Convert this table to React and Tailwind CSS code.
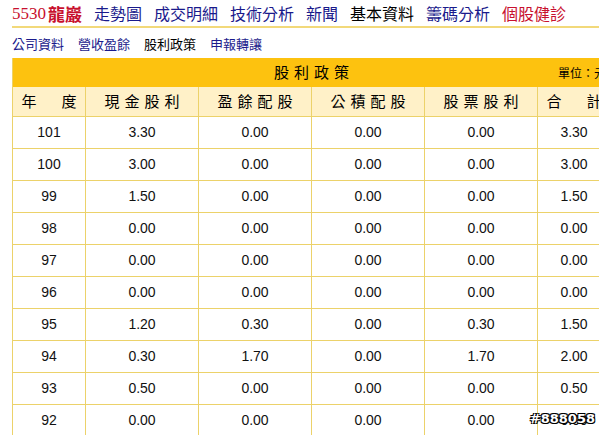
const NAV = [
  { label: "走勢圖", color: "text-[#1a1a8c]" },
  { label: "成交明細", color: "text-[#1a1a8c]" },
  { label: "技術分析", color: "text-[#1a1a8c]" },
  { label: "新聞", color: "text-[#1a1a8c]" },
  { label: "基本資料", color: "text-black" },
  { label: "籌碼分析", color: "text-[#1a1a8c]" },
  { label: "個股健診", color: "text-[#c8102e]" },
];

const SUB = [
  { label: "公司資料", active: false },
  { label: "營收盈餘", active: false },
  { label: "股利政策", active: true },
  { label: "申報轉讓", active: false },
];

const HEADERS = ["年　度", "現金股利", "盈餘配股", "公積配股", "股票股利", "合　計"];

const ROWS = [
  ["101", "3.30", "0.00", "0.00", "0.00", "3.30"],
  ["100", "3.00", "0.00", "0.00", "0.00", "3.00"],
  ["99", "1.50", "0.00", "0.00", "0.00", "1.50"],
  ["98", "0.00", "0.00", "0.00", "0.00", "0.00"],
  ["97", "0.00", "0.00", "0.00", "0.00", "0.00"],
  ["96", "0.00", "0.00", "0.00", "0.00", "0.00"],
  ["95", "1.20", "0.30", "0.00", "0.30", "1.50"],
  ["94", "0.30", "1.70", "0.00", "1.70", "2.00"],
  ["93", "0.50", "0.00", "0.00", "0.00", "0.50"],
  ["92", "0.00", "0.00", "0.00", "0.00", "0.00"],
];

const COLS = "grid grid-cols-[73px_113px_113px_113px_113px_73px]";
const CJK = "font-['Noto_Sans_CJK_TC','Liberation_Sans',sans-serif]";

export default function App() {
  return (
    <div className={`relative w-[599px] h-[435px] overflow-hidden bg-white ${CJK}`}>
      <div className="pl-[12px]">
        <div className="flex items-center h-[26px] gap-[12px] text-[16px] leading-none">
          <span className="flex items-center gap-[2px] text-[#c8102e]">
            <span className="font-['Liberation_Serif',serif] text-[17px]">5530</span>
            <span className="font-bold text-[17px]">龍巖</span>
          </span>
          {NAV.map((n) => (
            <span key={n.label} className={n.color}>
              {n.label}
            </span>
          ))}
        </div>
        <div className="h-[2px] bg-[#f2d97a]" />
        <div className="flex items-center h-[30px] gap-[14px] text-[13px] leading-none">
          {SUB.map((s) => (
            <span key={s.label} className={s.active ? "text-black" : "text-[#1a1a8c]"}>
              {s.label}
            </span>
          ))}
        </div>

        <div className="w-[598px] border-l border-[#ecd26a]">
          <div className="relative h-[29px] bg-[#fdc20f] flex items-center justify-center">
            <span className="text-[15px] tracking-[5px] pl-[5px] text-black">股利政策</span>
            <span className="absolute left-[545px] text-[12px] text-black whitespace-nowrap">
              單位：元
            </span>
          </div>
          <div className={`${COLS} h-[30px] bg-[#fff1c8] border-b border-[#ecd26a]`}>
            {HEADERS.map((h, i) => (
              <div
                key={i}
                className="flex items-center justify-center border-r border-[#ecd26a] text-[15px] tracking-[5px] pl-[5px] text-black"
              >
                {h}
              </div>
            ))}
          </div>
          {ROWS.map((r) => (
            <div key={r[0]} className={`${COLS} h-[32px] border-b border-[#ecd26a]`}>
              {r.map((v, i) => (
                <div
                  key={i}
                  className="flex items-center justify-center border-r border-[#ecd26a] font-['Liberation_Sans',sans-serif] text-[14px] text-[#111]"
                >
                  {v}
                </div>
              ))}
            </div>
          ))}
        </div>
      </div>
      <div className="absolute right-[4px] bottom-[10px] text-[13px] leading-none font-bold font-['DejaVu_Sans',sans-serif] text-white [text-shadow:-1px_-1px_0_#000,1px_-1px_0_#000,-1px_1px_0_#000,1px_1px_0_#000]">
        #888058
      </div>
    </div>
  );
}
